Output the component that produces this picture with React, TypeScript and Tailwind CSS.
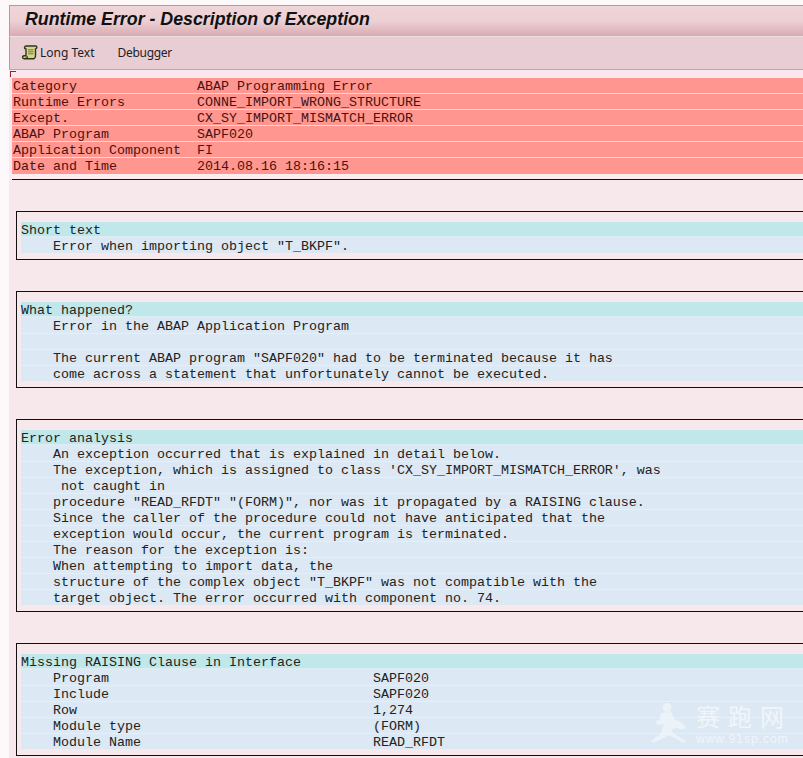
const headerRows = [
  ["Category", "ABAP Programming Error"],
  ["Runtime Errors", "CONNE_IMPORT_WRONG_STRUCTURE"],
  ["Except.", "CX_SY_IMPORT_MISMATCH_ERROR"],
  ["ABAP Program", "SAPF020"],
  ["Application Component", "FI"],
  ["Date and Time", "2014.08.16 18:16:15"],
];

const sections = [
  {
    title: "Short text",
    lines: ['Error when importing object "T_BKPF".'],
  },
  {
    title: "What happened?",
    lines: [
      "Error in the ABAP Application Program",
      "",
      'The current ABAP program "SAPF020" had to be terminated because it has',
      "come across a statement that unfortunately cannot be executed.",
    ],
  },
  {
    title: "Error analysis",
    lines: [
      "An exception occurred that is explained in detail below.",
      "The exception, which is assigned to class 'CX_SY_IMPORT_MISMATCH_ERROR', was",
      " not caught in",
      'procedure "READ_RFDT" "(FORM)", nor was it propagated by a RAISING clause.',
      "Since the caller of the procedure could not have anticipated that the",
      "exception would occur, the current program is terminated.",
      "The reason for the exception is:",
      "When attempting to import data, the",
      'structure of the complex object "T_BKPF" was not compatible with the',
      "target object. The error occurred with component no. 74.",
    ],
  },
];

const interfaceRows = [
  ["Program", "SAPF020"],
  ["Include", "SAPF020"],
  ["Row", "1,274"],
  ["Module type", "(FORM)"],
  ["Module Name", "READ_RFDT"],
];

function ScrollIcon() {
  return (
    <svg width="16" height="16" viewBox="0 0 16 16" className="shrink-0">
      <path
        d="M4 1h9.500c1.200 0 1.800 1.200 1 2.200l-1 .8V11c0 1-.5 2-1.500 2.700H2.500C1.200 13.700.5 13 .5 12.200s.8-1.400 2-1.400H4V4C3 4 2.400 3.200 2.600 2.300 2.900 1.400 3.400 1 4 1z"
        fill="#d6d68a"
        stroke="#2f3618"
        strokeWidth="1.400"
      />
      <path d="M6 4.800h5.500M6 6.800h5.500M6 8.800h5.500" stroke="#6f7c3a" strokeWidth="1" />
      <path d="M2.500 13.700c1.800 0 3-.9 3-2.400" fill="none" stroke="#2f3618" strokeWidth="1.200" />
    </svg>
  );
}

function Band({ children, cyan }: { children: React.ReactNode; cyan?: boolean }) {
  return (
    <div
      className={`h-4 whitespace-pre leading-[18px] ${
        cyan ? "bg-[#c0e8ea] border-b-2 border-[#dcecf1]" : "bg-[#dce8f3] border-b border-[#e6eff6]"
      }`}
    >
      {children}
    </div>
  );
}

function Section({ title, children }: { title: string; children: React.ReactNode }) {
  return (
    <section className="mb-[31px] ml-[7px] border-y border-l border-[#111] pt-2.5 pb-[5px] pl-1">
      <Band cyan>{title}</Band>
      {children}
    </section>
  );
}

export default function App() {
  return (
    <div className="relative h-[758px] w-[803px] overflow-hidden bg-[#fdf9fa] pt-[5px] pl-[9px] font-['Liberation_Mono',monospace] text-[13.33px] text-[#222]">
      <div className="h-[753px] overflow-hidden bg-[#f7e9eb]">
        <header className="h-[31px] border-t border-l border-[#b39c9f] bg-gradient-to-b from-[#efd5d8] via-[#ecd0d4] to-[#d8abb2] pt-[3px] pl-[15px] font-['Liberation_Sans',sans-serif] text-[17.8px] font-bold italic leading-5 text-[#111]">
          Runtime Error - Description of Exception
        </header>
        <div className="flex h-[34px] items-center border-t border-b border-l border-t-[#f0dde1] border-b-[#bfa5b1] border-l-[#b39c9f] bg-[#e8cdd4] pb-px pl-3 font-['Noto_Sans',sans-serif] text-xs text-[#222]">
          <ScrollIcon />
          <span className="ml-0.5">Long Text</span>
          <span className="ml-[23px] tracking-[-0.3px]">Debugger</span>
        </div>

        <div className="relative bg-[#fbe8ef] pt-2">
          <span className="absolute top-px left-px h-1.5 w-1.5 border-t border-l border-[#a02030]" />
          <div className="ml-[3px] text-[#4a1212]">
            {headerRows.map(([label, value]) => (
              <div
                key={label}
                className="flex h-4 whitespace-pre border-b border-[#fbdcc6] bg-[#ff9790] pl-px leading-[18px] last:border-b-0"
              >
                <span className="w-[184px] shrink-0">{label}</span>
                <span>{value}</span>
              </div>
            ))}
          </div>
        </div>
        <div className="h-[5px] bg-[#f9edf0]" />
        <div className="mb-[31px] ml-[3px] h-px bg-[#111]" />

        {sections.map((section) => (
          <Section key={section.title} title={section.title}>
            {section.lines.map((line, i) => (
              <Band key={i}>
                <span className="pl-8">{line}</span>
              </Band>
            ))}
          </Section>
        ))}

        <Section title="Missing RAISING Clause in Interface">
          {interfaceRows.map(([label, value]) => (
            <Band key={label}>
              <div className="flex pl-8">
                <span className="w-80 shrink-0">{label}</span>
                <span>{value}</span>
              </div>
            </Band>
          ))}
        </Section>
      </div>

      {/* watermark */}
      <div className="absolute top-[703px] left-[648px] flex gap-2 text-white opacity-60">
        <svg width="40" height="40" viewBox="0 0 40 40" fill="#f6fafc">
          <circle cx="19" cy="4.500" r="4.500" />
          <path d="M13 10l10-2 3 8 7 3 5 5-3 3-6-2-5 1 1 4 13 8-2 2-15-8-15 8-3-2 10-8 3-9-6 1-3-3 5-3z" />
        </svg>
        <div className="flex flex-col">
          <span className="font-['Noto_Sans_CJK_SC',sans-serif] text-2xl leading-[26px] tracking-[8px]">赛跑网</span>
          <span className="mt-1 font-['Liberation_Sans',sans-serif] text-xs leading-3 tracking-[1px]">www.91sp.com</span>
        </div>
      </div>
    </div>
  );
}
